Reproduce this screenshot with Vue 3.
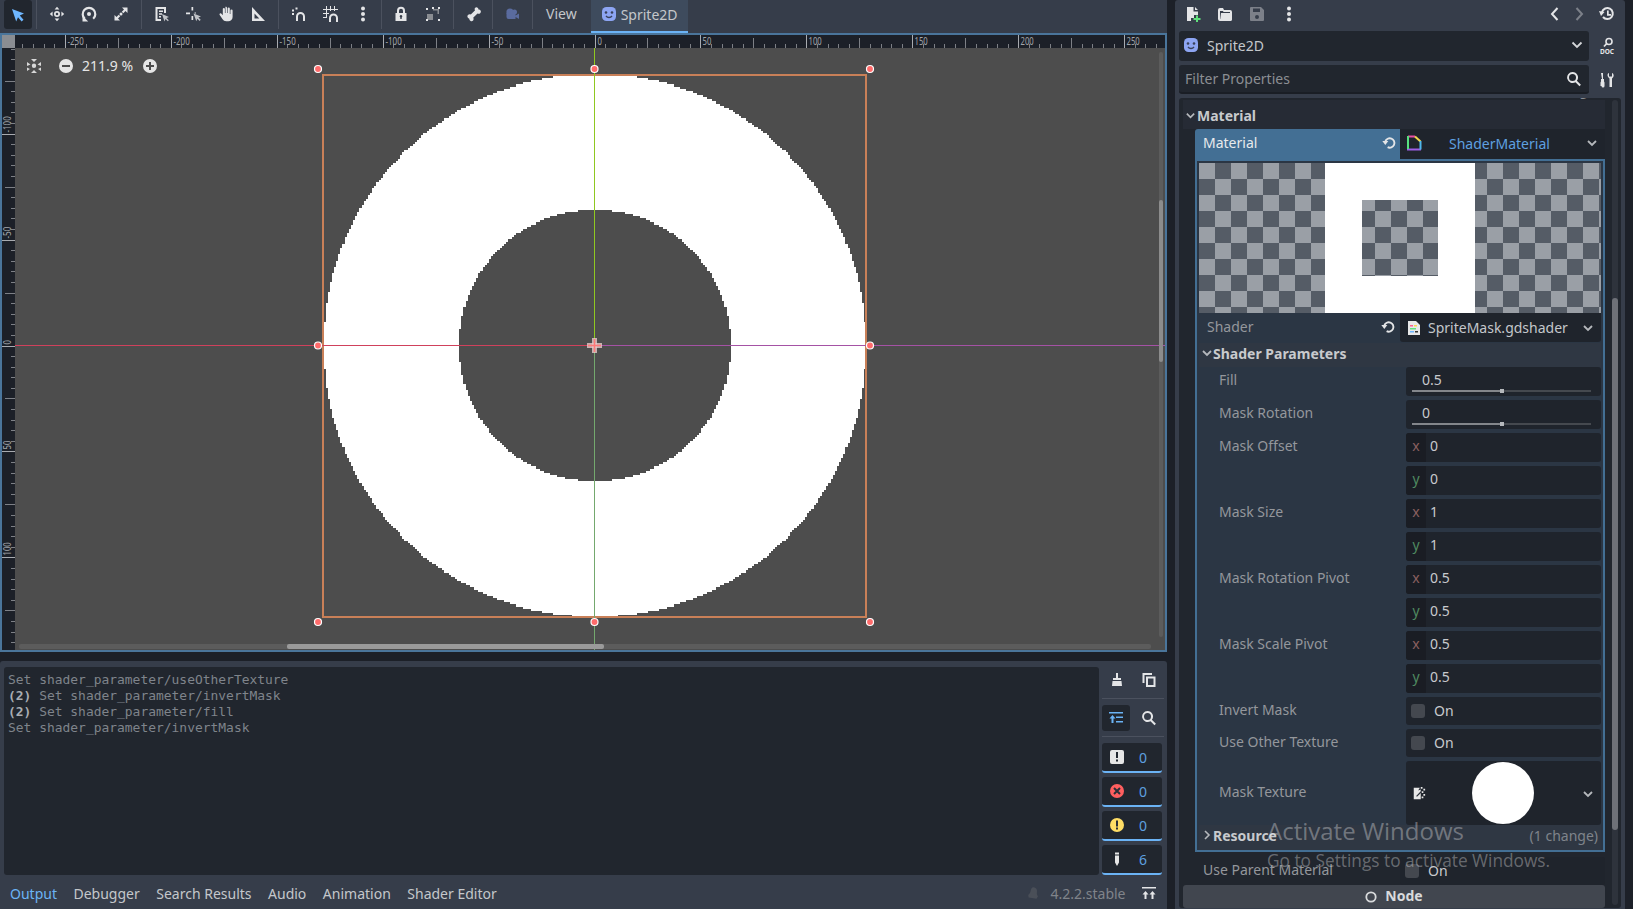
<template>
  <div class="app">
    <div class="left">
      <div class="toolbar">
        <div class="tool active"><svg class="ico" viewBox="0 0 16 16"><path d="M2 2l12 4.6-4.2 1.9 3.7 4.3-1.9 1.7-3.6-4.3L6.200 14.500z" /></svg></div>
        <i class="sep"></i>
        <div class="tool"><svg class="ico" viewBox="0 0 16 16"><path fill-rule="evenodd" d="M8 .8l2.400 2.800H5.600zM8 15.200l-2.400-2.800h4.800zM.8 8l2.800-2.400v4.800zM15.200 8l-2.800 2.400V5.600zM8 5a3 3 0 1 1 0 6 3 3 0 0 1 0-6zm0 1.700a1.300 1.300 0 1 0 0 2.600 1.300 1.300 0 0 0 0-2.600z" /></svg></div>
        <div class="tool"><svg class="ico" viewBox="0 0 16 16"><path fill="none" stroke="currentColor" stroke-width="2.200" d="M3.800 12.800a6.300 6.300 0 1 1 8.400 0" /><path d="M1.500 9.800v5.700h5.700zM8 6a2 2 0 1 1 0 4 2 2 0 0 1 0-4z" /></svg></div>
        <div class="tool"><svg class="ico" viewBox="0 0 16 16"><path d="M9 1.500h5.500V7l-2-2-2.200 2.200-1.500-1.500L11 3.500zM7 14.500H1.500V9l2 2 2.200-2.200 1.500 1.500L5 12.500zM8 6.500a1.500 1.500 0 1 1 0 3 1.500 1.500 0 0 1 0-3z" /></svg></div>
        <i class="sep"></i>
        <div class="tool"><svg class="ico" viewBox="0 0 16 16"><path d="M1.500 1H12v6h-2V3H3.500v10H7v2H1.500zM5 4.500h4V6H5zM5 7.300h3v1.500H5zM5 10.100h2v1.500H5z" /><path class="soft" d="M8 8l7 3-2.500 1 2.300 2.200-1 1-2.300-2.200-1 2.500z" /></svg></div>
        <div class="tool"><svg class="ico" viewBox="0 0 16 16"><path d="M5.500 1h1.700v3.500H5.500zM0 6.500h4v1.700H0zM5.500 10h1.700v4H5.500zM8.500 6.500H10v1H8.500z" /><path class="soft" d="M7.500 7.500l7.500 3-2.600 1.100 2.300 2.200-1.100 1.100-2.300-2.200-1 2.600z" /></svg></div>
        <div class="tool"><svg class="ico" viewBox="0 0 16 16"><path d="M7.800.8c.7 0 1.200.5 1.200 1.200v5h.6V2.600a1.100 1.100 0 0 1 2.200 0V8h.6V4.500a1.100 1.100 0 0 1 2.200 0V11c0 2.500-1.900 4.300-4.300 4.300H8.200c-1.700 0-2.800-.7-3.600-2L1.700 9c-.8-1.200.8-2.300 1.700-1.300l1.400 1.600V2.800a1.100 1.100 0 0 1 2.100 0V7h.6V2c0-.7-.4-1.200.3-1.200z" /></svg></div>
        <div class="tool"><svg class="ico" viewBox="0 0 16 16"><path fill-rule="evenodd" d="M2 1l13 14H2zm2.500 6.400v5.100h4.800z" /></svg></div>
        <i class="sep"></i>
        <div class="tool"><svg class="ico" viewBox="0 0 16 16"><path fill="none" stroke="currentColor" stroke-width="2" d="M6 15v-4.500a3.500 3.500 0 0 1 7 0V15" /><path d="M1 3.500h2v2H1zM4.500 1.500h2v2h-2zM1 7h2v2H1z" /></svg></div>
        <div class="tool"><svg class="ico" viewBox="0 0 16 16"><path d="M3 0h1v12H3zM7 0h1v5H7zM11 0h1v5h-1zM0 3h15v1H0zM0 7h6v1H0zM0 11h4v1H0z" /><path fill="none" stroke="currentColor" stroke-width="2" d="M7 16v-4a3.500 3.500 0 0 1 7 0v4" /></svg></div>
        <div class="tool"><svg class="ico" viewBox="0 0 16 16"><circle cx="8" cy="2.500" r="2" /><circle cx="8" cy="8" r="2" /><circle cx="8" cy="13.500" r="2" /></svg></div>
        <i class="sep tight"></i>
        <div class="tool"><svg class="ico" viewBox="0 0 16 16"><path fill="none" stroke="currentColor" stroke-width="2" d="M5 8V4.800a3 3 0 0 1 6 0V8" /><path fill-rule="evenodd" d="M2.500 7h11v8h-11zM8 9a1.300 1.300 0 0 0-.7 2.400V13h1.400v-1.600A1.300 1.300 0 0 0 8 9z" /></svg></div>
        <div class="tool"><svg class="ico" viewBox="0 0 16 16"><path class="dim" d="M2 8h6v6H2z" /><path class="dim" d="M8 3h6v5h-1.500V4.500H8z" /><path d="M1 13h2v2H1zM1 2h2v2H1zM13 13h2v2h-2zM13 1h2v2h-2zM7 1h2v2H7z" /></svg></div>
        <i class="sep"></i>
        <div class="tool"><svg class="ico" viewBox="0 0 16 16"><path d="M10.500 1.200a2.200 2.200 0 0 1 2 2.300 2.200 2.200 0 0 1 1.700 3.800c-.8.700-1.900.7-2.700.1l-4.300 4.300c.6.800.6 1.900-.1 2.700a2.200 2.200 0 0 1-3.800-1.700 2.200 2.200 0 0 1-1.100-3.900c.8-.7 1.800-.7 2.600-.2l4.300-4.300c-.6-.8-.6-1.900.1-2.600.5-.4 1-.6 1.300-.5z" /></svg></div>
        <i class="sep tight"></i>
        <div class="tool cam"><svg class="ico" viewBox="0 0 16 16"><circle cx="6" cy="6" r="3.600" /><circle cx="10.500" cy="6" r="2.500" /><path d="M2.500 7h9v6h-7a2 2 0 0 1-2-2zM11.500 9.500l3.500-2v5.500l-3.500-2z" /></svg></div>
        <i class="sep"></i>
        <span class="view">View</span>
        <div class="tab">
          <svg class="ico sprite" viewBox="0 0 16 16"><rect x="1" y="1" width="14" height="14" rx="4.500" fill="#8da5f3" /><circle cx="5" cy="6.500" r="1.300" fill="#39415a" /><circle cx="11" cy="6.500" r="1.300" fill="#39415a" /><path d="M5 10c1.500 2 4.500 2 6 0" fill="none" stroke="#39415a" stroke-width="1.300" /></svg>
          <span>Sprite2D</span>
        </div>
      </div>

      <div class="viewport">
        <svg class="canvas" width="1163" height="615" viewBox="2 35 1163 615">
          <rect x="2" y="35" width="1163" height="615" fill="#4d4d4d" />
          <path :d="ringPath" fill="#fff" shape-rendering="crispEdges" />
          <rect x="323" y="75" width="543" height="542" fill="none" stroke="#c98058" stroke-width="2" />

          <line x1="594.500" y1="48" x2="594.500" y2="345" stroke="#8fc820" />
          <line x1="594.500" y1="345" x2="594.500" y2="650" stroke="#74a86e" />
          <line x1="15" y1="345.500" x2="594" y2="345.500" stroke="#d0415c" />
          <line x1="594" y1="345.500" x2="1165" y2="345.500" stroke="#a552a5" />

          <g stroke="#e6cccc" stroke-opacity=".8" stroke-width="5">
            <line x1="587" y1="345.500" x2="602" y2="345.500" />
            <line x1="594.500" y1="338" x2="594.500" y2="353" />
          </g>
          <g stroke="#ff7a7a" stroke-width="1.600">
            <line x1="588" y1="345.500" x2="601" y2="345.500" />
            <line x1="594.500" y1="339" x2="594.500" y2="352" />
          </g>

          <circle v-for="h in handles" :key="h[0] + '-' + h[1]" :cx="h[0]" :cy="h[1]" r="3.500" fill="#ff6b6b" stroke="#fff" stroke-width="1.200" />

          <rect x="19" y="644" width="1132" height="5" rx="2" fill="#5c5c5c" />
          <rect x="287" y="644" width="317" height="5" rx="2" fill="#9a9a9a" />
          <rect x="1159" y="52" width="4" height="585" rx="2" fill="#5c5c5c" />
          <rect x="1159" y="200" width="4" height="162" rx="2" fill="#8c8c8c" />

          <rect x="2" y="35" width="1163" height="13" fill="#1c2028" />
          <rect x="2" y="35" width="13" height="615" fill="#1c2028" />
          <rect x="2" y="35" width="13" height="13" fill="#8a8d92" />
          <line v-for="t in topTicks" :key="'t' + t.x" :x1="t.x" :y1="t.y" :x2="t.x" y2="48" :stroke="t.color" />
          <text v-for="t in topLabels" :key="'tl' + t.x" :x="t.x + 2" y="44.500" class="rule" :textLength="t.w" lengthAdjust="spacingAndGlyphs">{{ t.text }}</text>
          <line v-for="t in sideTicks" :key="'s' + t.y" :x1="t.x" :y1="t.y" x2="15" :y2="t.y" :stroke="t.color" />
          <text v-for="t in sideLabels" :key="'sl' + t.y" class="rule" :transform="`translate(11 ${t.y - 2}) rotate(-90)`" :textLength="t.w" lengthAdjust="spacingAndGlyphs">{{ t.text }}</text>
        </svg>

        <div class="zoom-bar">
          <svg class="ico reset" viewBox="0 0 16 16"><path d="M1 4l3.500 2.500L1 8zM15 4l-3.500 2.500L15 8zM5 1l3 3 3-3zM5 15l3-3 3 3zM8 5.500a2.200 2.200 0 1 1 0 4.400 2.200 2.200 0 0 1 0-4.400zM1 9.500l3 1.500-3 2zM15 9.500l-3 1.500 3 2z" /></svg>
          <svg class="ico minus" viewBox="0 0 16 16"><path fill-rule="evenodd" d="M8 1a7 7 0 1 1 0 14A7 7 0 0 1 8 1zM4 7v2h8V7z" /></svg>
          <span class="pct">211.9 %</span>
          <svg class="ico plus" viewBox="0 0 16 16"><path fill-rule="evenodd" d="M8 1a7 7 0 1 1 0 14A7 7 0 0 1 8 1zM7 4v3H4v2h3v3h2V9h3V7H9V4z" /></svg>
        </div>
      </div>

      <div class="bottom">
        <div class="bottom-main">
          <div class="log">
            <div v-for="line in logLines" :key="line.text" class="log-line"><b v-if="line.count">(2) </b>{{ line.text }}</div>
          </div>
          <div class="log-side">
            <div class="side-row first">
              <svg class="ico" viewBox="0 0 16 16"><path d="M7 1h2v5h3v2H4V6h3zM3.500 9h9l.5 5H3z" /></svg>
              <svg class="ico" viewBox="0 0 16 16"><path fill-rule="evenodd" d="M1.500 1H11v2H3.500v8h-2zM5 4.500h9.500V15H5zm2 2V13h5.500V6.500z" /></svg>
            </div>
            <i class="hsep"></i>
            <div class="side-row">
              <div class="toggle"><svg class="ico" viewBox="0 0 16 16"><path d="M1 2h14v1.500H1zM8 6.500h7V8H8zM8 11h7v1.500H8zM4.500 5l3 3.500h-2V13h-2V8.500h-2z" /></svg></div>
              <svg class="ico" viewBox="0 0 16 16"><path fill-rule="evenodd" d="M6.500 1a5.500 5.500 0 0 1 4.400 8.800l4 4-1.400 1.400-4-4A5.500 5.500 0 1 1 6.500 1zm0 2a3.500 3.500 0 1 0 0 7 3.500 3.500 0 0 0 0-7z" /></svg>
            </div>
            <i class="hsep"></i>
            <div class="filters">
              <div class="filter">
                <svg class="ico" viewBox="0 0 16 16"><path fill="#e6e6e6" fill-rule="evenodd" d="M3 1h10a2 2 0 0 1 2 2v10a2 2 0 0 1-2 2H3a2 2 0 0 1-2-2V3a2 2 0 0 1 2-2zm4 2v6h2V3zm0 7.500v2h2v-2z" /></svg>
                <span>0</span>
              </div>
              <div class="filter">
                <svg class="ico" viewBox="0 0 16 16"><circle cx="8" cy="8" r="7" fill="#ff5f5f" /><path d="M5 5l6 6M11 5l-6 6" stroke="#2a2f38" stroke-width="2" /></svg>
                <span>0</span>
              </div>
              <div class="filter">
                <svg class="ico" viewBox="0 0 16 16"><circle cx="8" cy="8" r="7" fill="#ffdd65" /><path d="M7 3.500h2V9.500H7zM7 10.500h2v2H7z" fill="#2a2f38" /></svg>
                <span>0</span>
              </div>
              <div class="filter">
                <svg class="ico" viewBox="0 0 16 16"><path fill="#e6e6e6" d="M6 1.500h4v2H6zM6 4.500h4v7L8 15l-2-3.500z" /></svg>
                <span>6</span>
              </div>
            </div>
          </div>
        </div>
        <div class="tabs">
          <span v-for="(t, i) in tabs" :key="t" class="btab" :class="{ on: i === 0 }">{{ t }}</span>
          <span class="grow"></span>
          <svg class="ico bell" viewBox="0 0 16 16"><path d="M9 1.500c3 .5 4 3 3.500 5.500-.4 2 .3 3.500 1.200 4.700L12 14.500 3 13l-.5-2.800c1.200-.8 2.300-2.100 2.700-4.100C5.700 3.600 6.500 1.100 9 1.500z" /></svg>
          <span class="version">4.2.2.stable</span>
          <svg class="ico layout" viewBox="0 0 16 16"><path d="M1 2h14v1.500H1zM4.500 6l3 3.500h-2V14H3.500V9.500h-2zM11.500 6l3 3.500h-2V14h-2V9.500h-2z" /></svg>
        </div>
      </div>
    </div>

    <div class="dock">
      <div class="dock-top">
        <svg class="ico" viewBox="0 0 16 16"><path d="M2 1h6.500v4.500H13V9H9v3H6v3H2zM10 1l3 3h-3z" /><path fill="#5fe07c" d="M11 9.500h2V12h2.500v2H13v2h-2v-2H8.500v-2H11z" /></svg>
        <svg class="ico" viewBox="0 0 16 16"><path fill-rule="evenodd" d="M1 4a2 2 0 0 1 2-2h3l1 2h6a2 2 0 0 1 2 2v7a2 2 0 0 1-2 2H3a2 2 0 0 1-2-2zm2 1v8h10V6H6.500l-.5-1z" /><path d="M4 7h11v6a2 2 0 0 1-2 2H3z" /></svg>
        <svg class="ico muted" viewBox="0 0 16 16"><path fill-rule="evenodd" d="M2 1h10l3 3v10a1 1 0 0 1-1 1H2a1 1 0 0 1-1-1V2a1 1 0 0 1 1-1zm2 1.500V6h7V2.500zM8 9a2 2 0 1 0 0 4 2 2 0 0 0 0-4z" /></svg>
        <svg class="ico" viewBox="0 0 16 16"><circle cx="8" cy="2.500" r="2" /><circle cx="8" cy="8" r="2" /><circle cx="8" cy="13.500" r="2" /></svg>
        <span class="grow"></span>
        <svg class="ico nav" viewBox="0 0 16 16"><path d="M10.500 2L5 8l5.500 6" fill="none" stroke="currentColor" stroke-width="2" /></svg>
        <svg class="ico nav next muted" viewBox="0 0 16 16"><path d="M5.500 2L11 8l-5.500 6" fill="none" stroke="currentColor" stroke-width="2" /></svg>
        <svg class="ico hist" viewBox="0 0 16 16"><path d="M4 11a5.500 5.500 0 1 0-1-5" fill="none" stroke="currentColor" stroke-width="2" /><path d="M0 5l5.500 1-3.500 4zM8 4.500h1.700V8H12v1.700H8z" /></svg>
      </div>

      <div class="dock-row">
        <div class="picker">
          <svg class="ico" viewBox="0 0 16 16"><rect x="1" y="1" width="14" height="14" rx="4.500" fill="#8da5f3" /><circle cx="5" cy="6.500" r="1.300" fill="#39415a" /><circle cx="11" cy="6.500" r="1.300" fill="#39415a" /><path d="M5 10c1.500 2 4.500 2 6 0" fill="none" stroke="#39415a" stroke-width="1.300" /></svg>
          <span class="picker-name">Sprite2D</span>
          <span class="grow"></span>
          <svg class="chev big" viewBox="0 0 12 12"><path d="M1.500 3.500L6 8l4.500-4.500" /></svg>
        </div>
        <svg class="doc" viewBox="0 0 18 18">
          <circle cx="11" cy="4.500" r="3" fill="none" stroke="currentColor" stroke-width="1.600" />
          <path d="M8.800 6.500L6 9.500" stroke="currentColor" stroke-width="1.800" />
          <text x="9" y="16.500" class="doc-text">DOC</text>
        </svg>
      </div>

      <div class="dock-row filter-row">
        <div class="search">
          <span>Filter Properties</span>
          <span class="grow"></span>
          <svg class="ico" viewBox="0 0 16 16"><path fill-rule="evenodd" d="M6.500 1a5.500 5.500 0 0 1 4.400 8.800l4 4-1.400 1.400-4-4A5.500 5.500 0 1 1 6.500 1zm0 2a3.500 3.500 0 1 0 0 7 3.500 3.500 0 0 0 0-7z" /></svg>
        </div>
        <svg class="ico tools" viewBox="0 0 16 16"><path d="M2 1h2v6h1v2.500l.5 1V14a1.500 1.500 0 0 1-3 0h-1v-3.500l.5-1V7h1zM9 1.500L10 1v3.500h3V1l1 .5C15 3 15 5 13 6.500V15h-2.500V6.500C8.500 5 8 3 9 1.500z" /></svg>
      </div>

      <div class="inspector">
        <div class="insp-body">
          <div class="clip"><span>(1 change)</span></div>
          <div class="section top">
            <svg class="chev" viewBox="0 0 12 12"><path d="M2 4l4 4 4-4" /></svg>
            <b>Material</b>
          </div>
          <div class="mat-row">
            <div class="mat-label">
              <span>Material</span>
              <span class="grow"></span>
              <svg class="ico revert" viewBox="0 0 16 16"><path d="M3.500 7a5 5 0 1 1 2.500 6" fill="none" stroke="currentColor" stroke-width="2" /><path d="M.3 6.500h6.400l-3.200 4.200z" /></svg>
            </div>
            <div class="mat-value">
              <svg class="ico" viewBox="0 0 16 16" fill="none" stroke-width="2"><path stroke="#9f5fe8" d="M1 14.500H15" /><path stroke="#e84fa5" d="M2 1.500H9" /><path stroke="#57e07f" d="M2 1v13" /><path stroke="#f2d74c" d="M9 1.500l5.500 5" /><path stroke="#4fb7ea" d="M14.500 6v8.500" /></svg>
              <span class="shader-name">ShaderMaterial</span>
              <svg class="chev" viewBox="0 0 12 12"><path d="M2 4l4 4 4-4" /></svg>
            </div>
          </div>

          <div class="frame">
            <div class="preview"><div class="mask"></div></div>
            <div class="shader-row">
              <div class="shader-label">
                <span>Shader</span>
                <span class="grow"></span>
                <svg class="ico revert" viewBox="0 0 16 16"><path d="M3.500 7a5 5 0 1 1 2.500 6" fill="none" stroke="currentColor" stroke-width="2" /><path d="M.3 6.500h6.400l-3.200 4.200z" /></svg>
              </div>
              <div class="shader-value">
                <svg class="ico" viewBox="0 0 16 16"><path fill="#e8e8e8" d="M2 1h8l4 4v10H2z" /><path fill="#ff5f8f" d="M4 5h3v1.500H4z" /><path fill="#5fe07c" d="M4 8h6v1.500H4z" /><path fill="#6fb7ff" d="M4 11h4v1.500H4z" /><path fill="#ffd24f" d="M8 5h3v1.500H8z" /><path fill="#333" d="M9 11h3v1.500H9z" /></svg>
                <span>SpriteMask.gdshader</span>
                <span class="grow"></span>
                <svg class="chev" viewBox="0 0 12 12"><path d="M2 4l4 4 4-4" /></svg>
              </div>
            </div>
            <div class="section sub">
              <svg class="chev" viewBox="0 0 12 12"><path d="M2 4l4 4 4-4" /></svg>
              <b>Shader Parameters</b>
            </div>
            <div class="params">
              <div v-for="p in params" :key="p.label" class="param">
                <div class="plabel" :class="{ tall: p.kind === 'texture' }">{{ p.label }}</div>
                <div class="pcontrol">
                  <div v-if="p.kind === 'slider'" class="box slider">
                    <span class="slider-val">{{ p.value }}</span>
                    <div class="track"><div class="thumb"></div></div>
                  </div>
                  <template v-else-if="p.kind === 'vector'">
                    <div class="box vec">
                      <span class="axis x">x</span><span class="vec-val">{{ p.value }}</span>
                    </div>
                    <div class="box vec">
                      <span class="axis y">y</span><span class="vec-val">{{ p.value }}</span>
                    </div>
                  </template>
                  <div v-else-if="p.kind === 'check'" class="box check">
                    <i class="checkbox"></i><span>On</span>
                  </div>
                  <div v-else class="box texture">
                    <svg class="ico tex-ico" viewBox="0 0 16 16"><path fill="#e8e8e8" d="M2 2h7l-2 3 3-1v11H2z" /><path fill="#e8e8e8" d="M10 1h2v2h-2zM13 3h2v2h-2zM11 6h2v2h-2zM13 9h2v2h-2zM11 12h2v2h-2z" /><path fill="#2a2f38" d="M5 11l5-5 1 1-5 5H5z" /></svg>
                    <div class="tex-thumb"></div>
                    <svg class="chev" viewBox="0 0 12 12"><path d="M2 4l4 4 4-4" /></svg>
                  </div>
                </div>
              </div>
            </div>
            <div class="section res">
              <svg class="chev side" viewBox="0 0 12 12"><path d="M4 2l4 4-4 4" /></svg>
              <b>Resource</b>
              <span class="grow"></span>
              <span class="change">(1 change)</span>
            </div>
          </div>

          <div class="parent-row">
            <span class="parent-label">Use Parent Material</span>
            <div class="parent-box"><i class="checkbox"></i><span>On</span></div>
          </div>
          <div class="node-btn">
            <svg class="node-ico" viewBox="0 0 12 12"><circle cx="6" cy="6" r="4.700" fill="none" stroke="currentColor" stroke-width="1.800" /></svg>
            <b>Node</b>
          </div>
        </div>
        <div class="vscroll"><div class="vthumb"></div></div>
      </div>
    </div>

    <div class="activate">
      <div class="act1">Activate Windows</div>
      <div class="act2">Go to Settings to activate Windows.</div>
    </div>
  </div>
</template>

<script setup>
const STEP = 105.95 / 10 // ruler: 10 divisions every 50 units
const X0 = 594.5
const Y0 = 345.5

const topTicks = []
const topLabels = []
for (let i = -60; i <= 60; i++) {
  const x = Math.round(X0 + i * STEP) + 0.5
  if (x < 15 || x > 1165) continue
  const major = i % 10 === 0
  const mid = !major && i % 5 === 0
  topTicks.push({ x, y: major ? 35 : mid ? 38 : 44, color: major ? '#a8abb0' : '#7d8086' })
  if (major) {
    const text = String(i * 5)
    topLabels.push({ x, text, w: text.replace('-', '').length * 4.4 + (i < 0 ? 3 : 0) })
  }
}

const sideTicks = []
const sideLabels = []
for (let i = -30; i <= 30; i++) {
  const y = Math.round(Y0 + i * STEP) + 0.5
  if (y < 48 || y > 650) continue
  const major = i % 10 === 0
  const mid = !major && i % 5 === 0
  sideTicks.push({ y, x: major ? 2 : mid ? 5 : 11, color: major ? '#a8abb0' : '#7d8086' })
  if (major) {
    const text = String(i * 5)
    sideLabels.push({ y, text, w: text.replace('-', '').length * 4.4 + (i < 0 ? 3 : 0) })
  }
}

// the sprite is a 256px texture scaled up, so the ring has to stay blocky
function buildRing() {
  const scale = 2.122
  const left = 595 - 128 * scale
  const top = 345.5 - 128 * scale
  let d = ''
  for (let r = 0; r < 256; r++) {
    const c = r + 0.5 - 128
    const outer = Math.round(Math.sqrt(Math.max(0, 128 * 128 - c * c)))
    const inner = Math.abs(c) < 64 ? Math.round(Math.sqrt(64 * 64 - c * c)) : 0
    const y1 = (top + r * scale).toFixed(2)
    const y2 = (top + (r + 1) * scale).toFixed(2)
    const spans = inner ? [[128 - outer, 128 - inner], [128 + inner, 128 + outer]] : [[128 - outer, 128 + outer]]
    for (const [a, b] of spans) {
      d += `M${(left + a * scale).toFixed(2)} ${y1}H${(left + b * scale).toFixed(2)}V${y2}H${(left + a * scale).toFixed(2)}Z`
    }
  }
  return d
}
const ringPath = buildRing()

const handles = [
  [318, 69], [594.5, 69], [870, 69],
  [318, 345.5], [870, 345.5],
  [318, 622], [594.5, 622], [870, 622]
]

const logLines = [
  { text: 'Set shader_parameter/useOtherTexture' },
  { text: 'Set shader_parameter/invertMask', count: 2 },
  { text: 'Set shader_parameter/fill', count: 2 },
  { text: 'Set shader_parameter/invertMask' }
]

const tabs = ['Output', 'Debugger', 'Search Results', 'Audio', 'Animation', 'Shader Editor']

const params = [
  { label: 'Fill', kind: 'slider', value: '0.5' },
  { label: 'Mask Rotation', kind: 'slider', value: '0' },
  { label: 'Mask Offset', kind: 'vector', value: '0' },
  { label: 'Mask Size', kind: 'vector', value: '1' },
  { label: 'Mask Rotation Pivot', kind: 'vector', value: '0.5' },
  { label: 'Mask Scale Pivot', kind: 'vector', value: '0.5' },
  { label: 'Invert Mask', kind: 'check' },
  { label: 'Use Other Texture', kind: 'check' },
  { label: 'Mask Texture', kind: 'texture' }
]
</script>

<style>
html, body {
  margin: 0;
  background: #1c2028;
  overflow: hidden;
}
</style>

<style scoped>
.app {
  position: relative;
  display: flex;
  width: 1633px;
  height: 909px;
  overflow: hidden;
  background: #1c2028;
  color: #d0d2d5;
  font-family: "Noto Sans", sans-serif;
  font-size: 14px;
}
.grow { flex: 1; }
.ico { display: block; width: 16px; height: 16px; fill: currentColor; flex: none; }
.soft { opacity: .8; }
.dim { fill: #8a8d92; }
.muted { opacity: .4; }

.left { width: 1167px; flex: none; display: flex; flex-direction: column; }

.toolbar {
  display: flex;
  align-items: flex-start;
  height: 33px;
  flex: none;
  background: #363d4a;
  padding-left: 4px;
  box-sizing: border-box;
  color: #e4e5e7;
}
.tool { width: 32px; height: 28px; display: flex; align-items: center; justify-content: center; flex: none; }
.tool.active { width: 28px; height: 29px; background: #21262e; border-radius: 3px; color: #6fb7ff; }
.tool.cam { color: #5a6b9e; }
.sep { display: block; width: 1px; height: 29px; background: #4b515e; margin: 0 4px; flex: none; }
.sep.tight { margin: 0 3px 0 2px; }
.view { margin-left: 9px; line-height: 28px; color: #c4c7cb; }
.tab {
  margin-left: 14px;
  width: 97px;
  height: 33px;
  box-sizing: border-box;
  background: #3e4b5d;
  border-bottom: 2px solid #6bb3f5;
  display: flex;
  align-items: center;
  padding: 0 0 3px 10px;
  gap: 4px;
  color: #c4c7cb;
}

.viewport {
  position: relative;
  height: 619px;
  flex: none;
  box-sizing: border-box;
  border: 2px solid #4a759b;
}
.canvas { display: block; }
.rule { font-size: 10px; fill: #a3a6ab; font-family: "Noto Sans", sans-serif; }

.zoom-bar {
  position: absolute;
  left: 24px;
  top: 23px;
  display: flex;
  align-items: center;
  color: #e6e6e6;
}
.reset { opacity: .9; margin-left: 0; }
.minus { margin-left: 16px; }
.pct { margin-left: 8px; font-size: 14px; line-height: 16px; width: 59px; }
.plus { margin-left: 1px; }

.bottom {
  margin-top: 9px;
  flex: 1;
  background: #363d4a;
  display: flex;
  flex-direction: column;
  min-height: 0;
  border-radius: 3px 3px 0 0;
}
.bottom-main { display: flex; height: 214px; flex: none; padding-top: 6px; box-sizing: border-box; }
.log {
  margin-left: 4px;
  width: 1095px;
  height: 208px;
  box-sizing: border-box;
  background: #21262e;
  border-radius: 3px;
  padding: 5px 4px;
  font-family: "DejaVu Sans Mono", monospace;
  font-size: 12.950px;
  line-height: 16px;
  color: #7f848b;
}
.log-line b { color: #a9adb3; }
.log-side { flex: 1; padding: 0 3px; display: flex; flex-direction: column; color: #e4e5e7; }
.side-row { display: flex; align-items: center; justify-content: space-between; height: 26px; padding-right: 7px; }
.side-row.first { padding: 0 7px; }
.toggle { width: 28px; height: 26px; background: #21262e; border-radius: 3px; color: #6bb3f5; display: flex; align-items: center; justify-content: center; }
.hsep { display: block; height: 1px; background: #4b515e; margin: 5px 0 6px; flex: none; }
.filters { display: flex; flex-direction: column; gap: 4px; }
.filter {
  width: 60px;
  height: 30px;
  box-sizing: border-box;
  background: #21262e;
  border-bottom: 2px solid #6bb3f5;
  border-radius: 3px;
  display: flex;
  align-items: center;
  padding: 0 0 0 7px;
  color: #5ea0e0;
}
.filter span { margin-left: 14px; }

.tabs { display: flex; align-items: center; flex: 1; padding: 2px 10px 0; color: #c4c7cb; gap: 16.500px; }
.btab.on { color: #6bb3f5; }
.bell { color: #4a4f58; margin-right: -6px; width: 14px; height: 14px; }
.version { color: #80848a; width: 75px; white-space: nowrap; }
.layout { margin-left: -1px; color: #e4e5e7; }

.dock {
  margin-left: 8px;
  width: 450px;
  flex: none;
  background: #363d4a;
  display: flex;
  flex-direction: column;
  border-radius: 3px 3px 0 0;
}
.dock-top { display: flex; align-items: center; height: 28px; margin-bottom: 3px; padding: 0 10px; color: #e4e5e7; gap: 16px; }
.dock-top .nav.next { margin-left: -8px; }
.hist { margin-left: -4px; }
.dock-row { display: flex; align-items: center; height: 30px; padding-left: 4px; color: #e4e5e7; }
.picker {
  width: 410px;
  height: 30px;
  background: #21262e;
  border-radius: 3px;
  display: flex;
  align-items: center;
  padding: 0 6px 2px 4px;
  box-sizing: border-box;
  flex: none;
}
.picker-name { margin-left: 8px; color: #c4c7cb; }
.chev { display: block; width: 12px; height: 12px; fill: none; stroke: #b5b8bc; stroke-width: 1.800; flex: none; }
.chev.big { stroke: #d5d7da; }
.doc { width: 18px; height: 18px; margin-left: 9px; color: #e4e5e7; }
.doc-text { font-size: 6.500px; font-weight: 700; fill: currentColor; text-anchor: middle; font-family: "Noto Sans", sans-serif; }
.filter-row { height: 29px; margin-top: 4px; }
.search {
  width: 410px;
  height: 29px;
  box-sizing: border-box;
  background: #21262e;
  border-bottom: 2px solid #1a1e25;
  border-radius: 3px;
  display: flex;
  align-items: center;
  padding: 0 7px 0 6px;
  color: #8b8e93;
  flex: none;
}
.search .ico { color: #e4e5e7; }
.tools { margin-left: 10px; }

.inspector {
  margin: 4px 4px 1px;
  flex: 1;
  min-height: 0;
  background: #21262e;
  border-radius: 3px;
  display: flex;
  padding-left: 4px;
  gap: 7px;
}
.insp-body { width: 422px; flex: none; display: flex; flex-direction: column; }
.clip { height: 2px; overflow: hidden; text-align: right; padding-right: 5px; color: #8b8e93; line-height: 20px; }
.clip span { display: block; margin-top: -18px; }
.section { display: flex; align-items: center; color: #c8cacd; box-sizing: border-box; }
.section b { font-weight: 700; }
.section.top { height: 29px; background: #262b35; padding: 2px 0 0 2px; gap: 1px; }
.section.top .chev { width: 11px; height: 11px; }
.section.sub { height: 24px; background: #2f3743; margin-top: 1px; padding: 0 0 4px 2px; }
.section.res { height: 25px; background: #2f3743; padding: 0 3px 5px 2px; }
.section.res .chev { stroke-width: 1.600; }
.change { color: #7f848b; }

.mat-row { display: flex; height: 30px; margin-left: 12px; }
.mat-label {
  width: 205px;
  background: #436f94;
  border-radius: 3px 0 0 0;
  display: flex;
  align-items: center;
  padding: 0 3px 4px 8px;
  box-sizing: border-box;
  color: #e8eaec;
}
.revert { width: 15px; height: 15px; color: #e4e5e7; }
.mat-value {
  width: 205px;
  background: #1f242c;
  display: flex;
  align-items: center;
  padding: 0 7px 2px 6px;
  box-sizing: border-box;
}
.shader-name { color: #5ea0e0; margin-left: 27px; flex: 1; }

.frame {
  margin-left: 12px;
  width: 410px;
  box-sizing: border-box;
  border: 2px solid #436f94;
  background: #2b3644;
  padding: 2px 2px 0;
}
.preview {
  height: 150px;
  display: flex;
  justify-content: center;
  background: repeating-conic-gradient(#555c66 0 25%, #9a9fa6 0 50%) 0 0 / 32px 32px;
}
.mask { width: 150px; height: 150px; box-sizing: border-box; border: 37px solid #fff; }
.shader-row { display: flex; height: 29px; }
.shader-label {
  width: 201px;
  display: flex;
  align-items: center;
  padding: 0 4px 2px 8px;
  box-sizing: border-box;
  color: #94979c;
}
.shader-value {
  width: 201px;
  background: #1f242c;
  border-radius: 0 0 3px 3px;
  display: flex;
  align-items: center;
  padding: 0 7px 0 6px;
  box-sizing: border-box;
  gap: 6px;
  color: #c4c7cb;
}

.params { display: flex; flex-direction: column; gap: 4px; }
.param { display: flex; align-items: flex-start; }
.plabel { width: 207px; padding-left: 20px; box-sizing: border-box; height: 24px; display: flex; align-items: center; color: #94979c; flex: none; }
.plabel.tall { height: 60px; }
.pcontrol { width: 195px; display: flex; flex-direction: column; gap: 4px; }
.box { background: #1f242c; border-radius: 3px; box-sizing: border-box; color: #c8cacd; }
.slider { height: 29px; position: relative; padding: 3px 0 0 16px; line-height: 20px; }
.track { position: absolute; left: 6px; right: 10px; top: 23px; height: 2px; background: linear-gradient(90deg, #83868b 50%, #45494f 50%); }
.thumb { position: absolute; left: calc(50% - 2px); top: -1px; width: 4px; height: 4px; background: #b5b8bc; }
.vec { height: 29px; display: flex; }
.axis { width: 20px; background: #1a1d24; text-align: center; line-height: 25px; border-radius: 3px 0 0 3px; }
.axis.x { color: #8a6060; }
.axis.y { color: #4f8a60; }
.vec-val { margin-left: 4px; line-height: 25px; }
.check { height: 28px; display: flex; align-items: center; padding: 0 0 0 5px; gap: 9px; }
.check span { margin-bottom: 2px; }
.checkbox { display: block; width: 14px; height: 14px; background: #44484f; border-radius: 3px; flex: none; }
.texture { height: 64px; display: flex; align-items: center; position: relative; justify-content: center; padding-right: 1px; }
.tex-ico { position: absolute; left: 6px; top: 25px; width: 14px; height: 14px; }
.tex-thumb { width: 62px; height: 62px; background: #fff; border-radius: 50%; }
.texture .chev { position: absolute; right: 7px; top: 27px; }
.parent-row { display: flex; align-items: center; height: 28px; margin-top: 5px; }
.parent-label { width: 217px; padding: 0 0 3px 20px; box-sizing: border-box; color: #94979c; flex: none; }
.parent-box {
  width: 205px;
  height: 28px;
  background: #1f242c;
  border-radius: 3px;
  display: flex;
  align-items: center;
  padding-left: 5px;
  box-sizing: border-box;
  gap: 9px;
  color: #c8cacd;
}
.parent-box span { margin-bottom: 2px; }
.node-btn {
  height: 23px;
  background: #41464f;
  border-radius: 3px;
  display: flex;
  align-items: center;
  justify-content: center;
  gap: 8px;
  padding-bottom: 2px;
  box-sizing: border-box;
  color: #d8dadc;
}
.node-ico { width: 12px; height: 12px; margin-top: 2px; }
.vscroll { position: relative; width: 6px; background: #2e333c; border-radius: 3px; margin: 2px 0 3px; flex: none; }
.vthumb { position: absolute; top: 198px; height: 532px; left: 0; right: 0; background: #6e7178; border-radius: 3px; }

.activate {
  position: absolute;
  left: 1267px;
  top: 814px;
  pointer-events: none;
  font-family: "Open Sans", sans-serif;
  color: rgba(255, 255, 255, .32);
  white-space: nowrap;
}
.act1 { font-size: 24px; line-height: 34px; }
.act2 { font-size: 17.300px; line-height: 22px; margin-top: 2px; }
</style>
